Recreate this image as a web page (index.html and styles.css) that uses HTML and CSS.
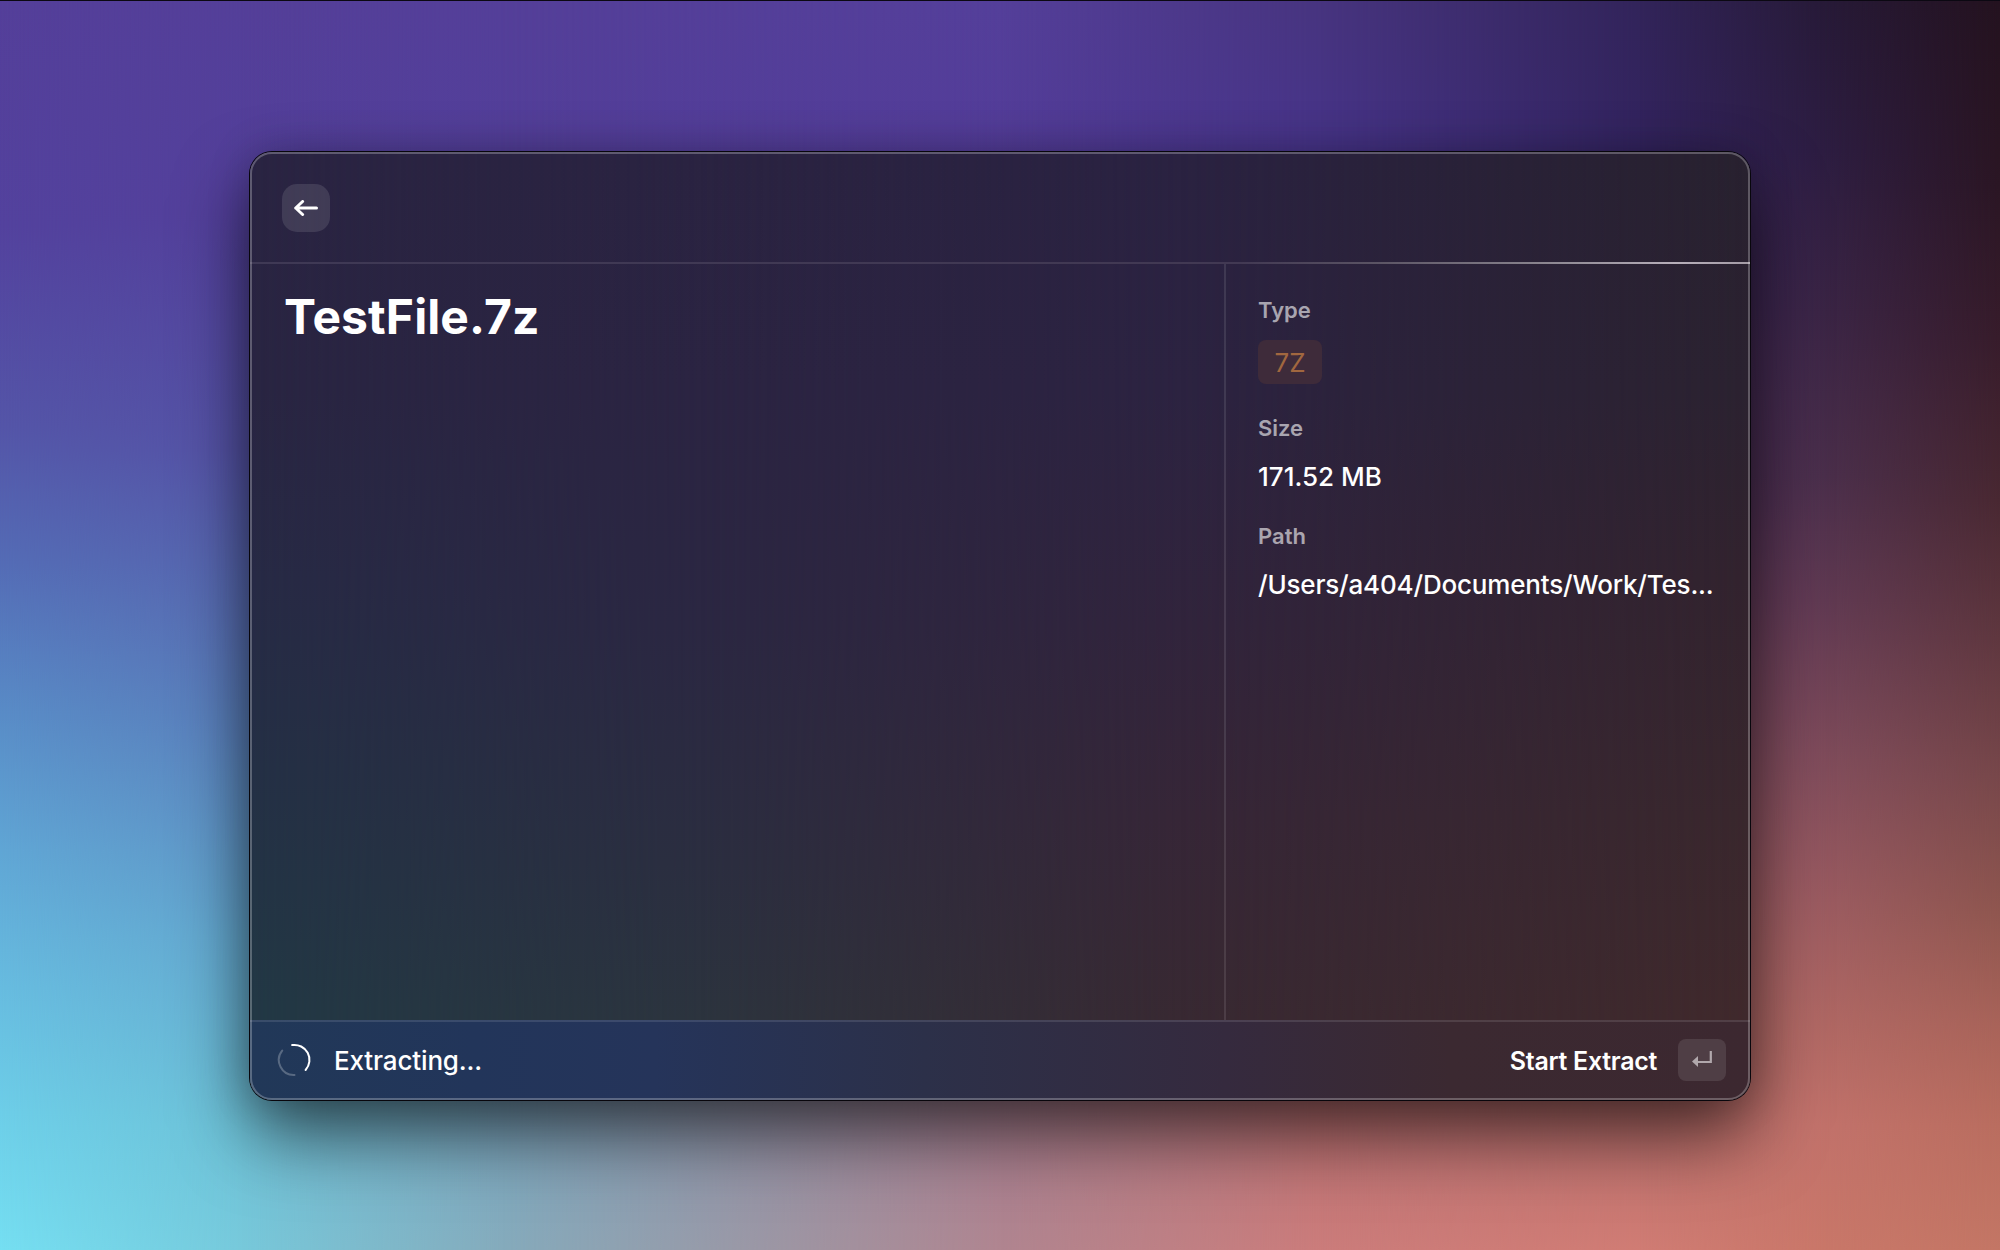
FILE: index.html
```html
<!DOCTYPE html>
<html lang="en">
<head>
<meta charset="utf-8">
<title>TestFile.7z</title>
<link rel="stylesheet" href="styles.css">
</head>
<body>
<div class="desktop">
  <div class="mesh wallpaper" aria-hidden="true"><i></i><i></i><i></i><i></i><i></i><i></i><i></i><i></i></div>
  <main class="window">
    <div class="mesh glass" aria-hidden="true"><i></i><i></i><i></i><i></i></div>
    <header class="topbar">
      <button class="back" aria-label="Back">
        <svg width="24" height="16" viewBox="0 0 24 16" fill="none" stroke="#fff" stroke-width="3" stroke-linecap="round" stroke-linejoin="round"><path d="M22.5 8H1.7M8.6 1.5 1.7 8 8.6 14.5"/></svg>
      </button>
    </header>
    <section class="content">
      <div class="detail"><h1>TestFile.7z</h1></div>
      <dl class="metadata">
        <div class="type"><dt>Type</dt><dd><span class="tag">7Z</span></dd></div>
        <div><dt>Size</dt><dd>171.52 MB</dd></div>
        <div><dt>Path</dt><dd class="path">/Users/a404/Documents/Work/Tes...</dd></div>
      </dl>
    </section>
    <footer class="actions">
      <svg class="spinner" width="34" height="34" viewBox="0 0 34 34" fill="none" stroke="#fff" stroke-width="2" stroke-linecap="round"><path d="M15.2 2.1A15 15 0 0 1 28.6 27"/><path d="M17.5 32A15 15 0 0 1 5.2 7.6" opacity=".25"/></svg>
      <span class="status">Extracting...</span>
      <span class="primary">Start Extract</span>
      <kbd><svg width="20" height="16" viewBox="0 0 20 16"><path d="M18.8 0v11H6" fill="none" stroke="#b1a8ac" stroke-width="2.2"/><path d="M0 10.5 6 5v11z" fill="#b1a8ac"/></svg></kbd>
    </footer>
  </main>
</div>
</body>
</html>
```
FILE: styles.css
```css
* { box-sizing: border-box; }
body { margin: 0; font-family: Inter, "Liberation Sans", sans-serif; color: #fff; }
.desktop {
  position: relative;
  width: 2000px;
  height: 1250px;
  padding: 152px 250px 150px;
  overflow: hidden;
  isolation: isolate;
}
/* Colour meshes: each column fades in over the one before it. */
.mesh { position: absolute; inset: 0; z-index: -1; overflow: hidden; }
.mesh i { position: absolute; inset: 0; mask-image: linear-gradient(90deg, transparent var(--from), #000 var(--to)); }
.mesh i:first-child { mask-image: none; }
.wallpaper { border-top: 1px solid #0b0812; }
.wallpaper i:nth-child(1) { background: linear-gradient(#543f9a 0, #53429e 18%, #5455a8 34%, #546cb6 45%, #598cc7 57%, #60a6d5 68%, #67bce0 79%, #6dcee8 89%, #75dff2 100%); }
.wallpaper i:nth-child(2) { --from: 0%; --to: 12%; background: linear-gradient(#543f99 0, #53409b 17%, #5553a6 36%, #5a7ebb 57%, #64a8cf 75%, #6ec2d8 90%, #77c9db 100%); }
.wallpaper i:nth-child(3) { --from: 12%; --to: 25%; background: linear-gradient(#543f99 0, #533f9a 15%, #5555a8 40%, #6a93bc 75%, #7fa9bf 92%, #85abbc 100%); }
.wallpaper i:nth-child(4) { --from: 25%; --to: 50%; background: linear-gradient(#543f9a 0, #533c98 15%, #6d4b8c 50%, #a47d91 85%, #b08590 100%); }
.wallpaper i:nth-child(5) { --from: 50%; --to: 66%; background: linear-gradient(#47347f 0, #47348a 13%, #6d4268 50%, #b76d70 85%, #cb7c7b 100%); }
.wallpaper i:nth-child(6) { --from: 66%; --to: 82%; background: linear-gradient(#32245a 0, #33245f 12%, #4a2b58 40%, #a05f64 75%, #d07c74 100%); }
.wallpaper i:nth-child(7) { --from: 82%; --to: 91%; background: linear-gradient(#271a38 0, #2d1d42 12%, #3b2546 25%, #4b2f4c 38%, #613a53 48%, #7e4b5b 60%, #9b5b61 72%, #b06864 82%, #c2726b 90%, #c97769 100%); }
.wallpaper i:nth-child(8) { --from: 91%; --to: 100%; background: linear-gradient(#24121f 0, #2b1624 15%, #371c2b 27%, #492832 40%, #5f373f 51%, #77474a 62%, #8f564f 73%, #a86359 82%, #b96d5f 90%, #c37665 100%); }

.window {
  position: relative;
  display: flex;
  flex-direction: column;
  width: 1500px;
  height: 948px;
  border-radius: 22px;
  box-shadow: 0 0 0 1px #08060c, 0 36px 72px rgba(0, 0, 0, .58), 0 0 44px rgba(0, 0, 0, .2);
  isolation: isolate;
}
.window::after {
  content: "";
  position: absolute;
  inset: 0;
  border: 2px solid rgba(255, 255, 255, .25);
  border-radius: 22px;
}
.glass { border-radius: 22px; }
.glass i:nth-child(1) { background: linear-gradient(#2a2442 0, #292542 25%, #272a45 45%, #243045 65%, #223845 90%); }
.glass i:nth-child(2) { --from: 0%; --to: 30%; background: linear-gradient(#2a2341 0, #2b2442 25%, #2b2742 50%, #2b2e40 75%, #2c343e 92%); }
.glass i:nth-child(3) { --from: 30%; --to: 62%; background: linear-gradient(#2a2241 0, #2c2341 25%, #31243c 50%, #362637 70%, #382932 92%); }
.glass i:nth-child(4) { --from: 62%; --to: 100%; background: linear-gradient(#28212f 0, #2b2230 25%, #32232e 45%, #39272d 70%, #40292c 92%); }

.topbar {
  display: flex;
  align-items: center;
  height: 112px;
  padding: 0 32px;
  border-bottom: 2px solid;
  border-image: linear-gradient(90deg, #3f3955 0, #423953 66%, #5b5464 75%, #85808a 85%, #b7afba 95%, #a39ba5 100%) 1;
}
.back {
  display: grid;
  place-items: center;
  width: 48px;
  height: 48px;
  margin-top: 2px;
  padding: 0;
  border: 0;
  border-radius: 15px;
  background: rgba(255, 255, 255, .11);
}
.content { display: flex; flex: 1; min-height: 0; }
.detail { flex: 1; padding: 24px 34px; }
h1 { margin: 0; font-size: 48px; line-height: 58px; font-weight: 700; letter-spacing: .1px; }
.metadata {
  width: 526px;
  margin: 0;
  padding: 32px;
  border-left: 2px solid rgba(255, 255, 255, .1);
}
.metadata > div { height: 108px; }
.metadata > .type { height: 118px; }
dt { font-size: 22px; line-height: 28px; font-weight: 600; color: rgba(255, 255, 255, .6); }
dd {
  margin: 17px 0 0;
  font-size: 26px;
  line-height: 36px;
  font-weight: 500;
  white-space: nowrap;
}
.path { letter-spacing: -.18px; }
.type dd { margin-top: 16px; line-height: 45px; }
.tag { display: block; width: 64px; height: 44px; border-radius: 8px; text-align: center; color: #a1673f; background: #3e2b3a; font-weight: 400; }
.actions {
  display: flex;
  align-items: center;
  height: 80px;
  padding: 0 24px 2px 27px;
  border-top: 2px solid rgba(255, 255, 255, .11);
  border-radius: 0 0 22px 22px;
  background: linear-gradient(90deg, #213858 0, #22355a 15%, #25345a 27%, #2c3049 45%, #352a3e 65%, #3b2931 80%, #3c2830 100%);
}
.status { margin-left: 23px; font-size: 26px; font-weight: 500; letter-spacing: -.15px; }
.primary { margin-left: auto; padding-top: 1px; font-size: 25px; font-weight: 600; letter-spacing: -.3px; }
kbd {
  display: grid;
  place-items: center;
  width: 48px;
  height: 42px;
  margin-left: 21px;
  padding-bottom: 3px;
  border-radius: 8px;
  background: #4f3e45;
}
```
